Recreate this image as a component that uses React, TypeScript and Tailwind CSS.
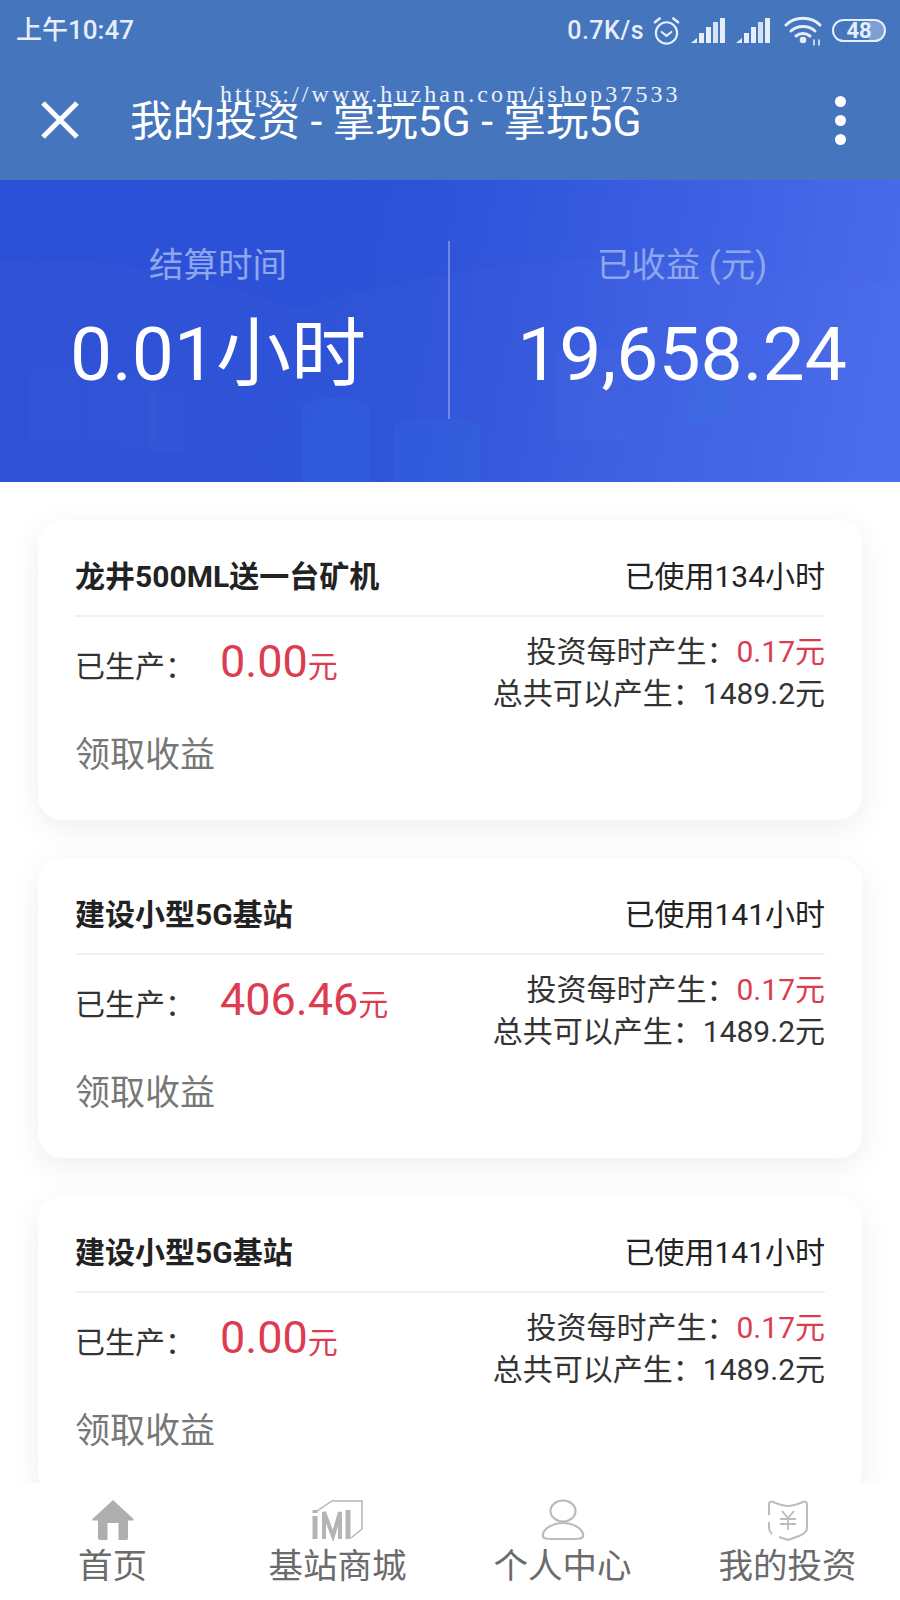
const FONT = "font-['Roboto','Noto_Sans_CJK_SC',sans-serif]";

interface Invest {
  title: string;
  used: string;
  produced: string;
}

const INVESTS: Invest[] = [
  { title: "龙井500ML送一台矿机", used: "已使用134小时", produced: "0.00" },
  { title: "建设小型5G基站", used: "已使用141小时", produced: "406.46" },
  { title: "建设小型5G基站", used: "已使用141小时", produced: "0.00" },
];

function SignalIcon() {
  return (
    <svg width="35" height="26" viewBox="0 0 35 26" fill="#e6eef9">
      <polygon points="0,25 6,20 6,25" />
      <rect x="8" y="15" width="5" height="10" />
      <rect x="15" y="9" width="5" height="16" />
      <rect x="22" y="4" width="5" height="21" opacity="0.9" />
      <rect x="29" y="0" width="5" height="25" />
    </svg>
  );
}

function AlarmIcon() {
  return (
    <svg width="29" height="30" viewBox="0 0 30 30" fill="none" stroke="#e6eef9" strokeWidth="2.2" strokeLinecap="round" strokeLinejoin="round">
      <circle cx="15" cy="17" r="11" />
      <path d="M10 16l5 4 5-4" />
      <path d="M3 6l5-4M27 6l-5-4" strokeWidth="2.6" />
    </svg>
  );
}

function WifiIcon() {
  return (
    <svg width="38" height="30" viewBox="0 0 38 30" fill="none" stroke="#e6eef9" strokeWidth="3" strokeLinecap="round">
      <path d="M2 9c9-9 25-9 34 0" />
      <path d="M7 15c6.500-6 17.500-6 24 0" />
      <path d="M12 20c4-3.500 10-3.500 14 0" />
      <circle cx="19" cy="24" r="1.800" fill="#e6eef9" />
      <path d="M30 24v5M35 24v5" strokeWidth="1.600" />
    </svg>
  );
}

function BannerArt() {
  return (
    <svg className="absolute inset-0 h-full w-full" viewBox="0 0 900 302" preserveAspectRatio="none" fill="#ffffff">
      <path d="M0 80C120 70 240 110 300 130C420 90 560 70 700 85C790 95 850 110 900 100V302H0Z" opacity="0.015" />
      <rect x="30" y="190" width="50" height="70" opacity="0.015" />
      <rect x="85" y="195" width="70" height="70" opacity="0.01" />
      <rect x="150" y="210" width="36" height="62" opacity="0.015" />
      <path d="M302 225c20-10 48-10 68 0v77h-68z" fill="#2f7fe0" opacity="0.14" />
      <path d="M394 245c26-10 60-10 86 0v57h-86z" fill="#2f7fe0" opacity="0.14" />
      <rect x="555" y="170" width="70" height="90" opacity="0.018" />
      <path d="M690 185l40-15v62l-40 16z" fill="#2f7fe0" opacity="0.18" />
    </svg>
  );
}

function InvestCard({ item }: { item: Invest }) {
  return (
    <div className="h-[300px] shrink-0 rounded-[24px] bg-white px-[37px] shadow-[0_8px_32px_rgba(0,0,0,0.07)]">
      <div className="flex h-[97px] items-center justify-between border-b-2 border-[#f1f1f1] pt-[18px] text-[#222]">
        <span className="text-[30px] font-bold">{item.title}</span>
        <span className="text-[30px]">{item.used}</span>
      </div>
      <div className="flex h-[100px] items-center justify-between">
        <div className="flex items-baseline pb-[10px] text-[#333]">
          <span className="w-[145px] text-[30px]">已生产：</span>
          <span className="text-[45px] text-[#dc3c50]">{item.produced}</span>
          <span className="text-[30px] text-[#dc3c50]">元</span>
        </div>
        <div className="pt-[12px] text-right text-[30px] leading-[42px] text-[#333]">
          <div>
            投资每时产生：<span className="text-[#dc3c50]">0.17元</span>
          </div>
          <div>总共可以产生：1489.2元</div>
        </div>
      </div>
      <div className="mt-[15px] text-[35px] leading-[48px] text-[#777]">领取收益</div>
    </div>
  );
}

function NavItem({ label, icon }: { label: string; icon: React.ReactNode }) {
  return (
    <div className="flex flex-col items-center">
      <div className="flex h-[44px] items-center justify-center">{icon}</div>
      <span className="text-[34.500px] leading-[48px] text-[#6b6b6b]">{label}</span>
    </div>
  );
}

export default function App() {
  return (
    <div className={`relative flex h-[1600px] w-[900px] flex-col overflow-hidden bg-white ${FONT}`}>
      {/* status bar + title bar */}
      <div className="flex h-[60px] shrink-0 items-center justify-between bg-[#4575bd] pl-[16px] pr-[14px] pt-[1px] text-[#e6eef9]">
        <span className="text-[26px] font-medium">上午10:47</span>
        <div className="flex items-center">
          <span className="text-[25px] font-medium tracking-[0.5px]">0.7K/s</span>
          <span className="ml-[8px]"><AlarmIcon /></span>
          <span className="ml-[10px]"><SignalIcon /></span>
          <span className="ml-[10px]"><SignalIcon /></span>
          <span className="ml-[13px]"><WifiIcon /></span>
          <div className="ml-[10px] flex h-[23px] w-[54px] items-center justify-center rounded-full border-2 border-[#e6eef9] bg-[linear-gradient(90deg,transparent_70%,rgba(230,238,249,0.35)_70%)] text-[22px] font-bold leading-none">
            48
          </div>
        </div>
      </div>
      <div className="flex h-[120px] shrink-0 items-center bg-[#4575bd] pl-[41px] pr-[54px] text-white">
        <svg width="38" height="38" viewBox="0 0 38 38" stroke="#ffffff" strokeWidth="5">
          <path d="M2 2l34 34M36 2L2 36" />
        </svg>
        <span className="ml-[51px] flex-1 pt-[5px] text-[42.500px] leading-none">我的投资 - 掌玩5G - 掌玩5G</span>
        <div className="flex flex-col gap-[8px]">
          <span className="h-[11px] w-[11px] rounded-full bg-white" />
          <span className="h-[11px] w-[11px] rounded-full bg-white" />
          <span className="h-[11px] w-[11px] rounded-full bg-white" />
        </div>
      </div>

      {/* watermark */}
      <span className="absolute left-[220px] top-[79px] font-['Liberation_Serif',serif] text-[24px] leading-[30px] tracking-[3.100px] text-white/90">
        https://www.huzhan.com/ishop37533
      </span>

      {/* banner */}
      <div className="relative flex h-[302px] shrink-0 bg-[linear-gradient(100deg,#2b4fd6_0%,#2d52d8_45%,#4b6cec_100%)] pt-[61px]">
        <BannerArt />
        <div className="relative flex w-[436px] flex-col items-center">
          <span className="text-[34.500px] leading-[48px] text-[#8ea6ec]">结算时间</span>
          <span className="mt-[17px] text-[75px] leading-[96px] text-white">0.01小时</span>
        </div>
        <div className="relative ml-[12px] h-[178px] w-[2px] bg-white/30" />
        <div className="relative ml-[14px] flex flex-1 flex-col items-center">
          <span className="text-[34.500px] leading-[48px] text-[#8ea6ec]">已收益 (元)</span>
          <span className="mt-[17px] text-[75px] leading-[96px] text-white">19,658.24</span>
        </div>
      </div>

      {/* invest list */}
      <div className="flex min-h-0 flex-1 flex-col gap-[38px] overflow-hidden px-[38px] pt-[38px]">
        {INVESTS.map((item, i) => (
          <InvestCard key={i} item={item} />
        ))}
      </div>

      {/* bottom nav */}
      <div className="grid h-[117px] shrink-0 grid-cols-4 bg-white pt-[15px]">
        <NavItem
          label="首页"
          icon={
            <svg width="42" height="40" viewBox="0 0 42 40" fill="#aeaeae">
              <path d="M21 0L.5 19c-.6.8 0 1.500 1 1.500H6V38c0 1 1 2 2 2h7.500V23h11v17H34c1 0 2-1 2-2V20.500h4.500c1 0 1.600-.7 1-1.500z" />
            </svg>
          }
        />
        <NavItem
          label="基站商城"
          icon={
            <svg width="52" height="42" viewBox="0 0 52 42" fill="none" stroke="#b5b5b5">
              <path d="M5 12l15-10h30v28l-11 9" strokeWidth="1.500" />
              <path d="M3 11v3M3 17v23" strokeWidth="5" />
              <path d="M12 40V13l9 24 7-24v27" strokeWidth="4" />
              <path d="M36 11v29" strokeWidth="5" />
            </svg>
          }
        />
        <NavItem
          label="个人中心"
          icon={
            <svg width="44" height="42" viewBox="0 0 44 42" fill="none" stroke="#bcbcbc" strokeWidth="2.200">
              <ellipse cx="22" cy="12" rx="12.500" ry="10.500" />
              <path d="M10 40c-6 0-9-1-8-5 1-5 9-11 20-11s19 6 20 11c1 4-2 5-8 5z" />
            </svg>
          }
        />
        <NavItem
          label="我的投资"
          icon={
            <svg width="42" height="42" viewBox="0 0 42 42" fill="none" stroke="#bcbcbc" strokeWidth="2">
              <path d="M2 16V5c0-2 2-3 4-2 5 2 10 4 15 4s10-2 15-4c2-1 4 0 4 2v24c0 4-3 6-8 8l-11 4-9-3" />
              <path d="M2 23v6c0 2 1 4 3 6" />
              <path d="M15 12l6 7 6-7M13 20h16M13 25h16M21 19v12" strokeWidth="1.800" />
            </svg>
          }
        />
      </div>
    </div>
  );
}
